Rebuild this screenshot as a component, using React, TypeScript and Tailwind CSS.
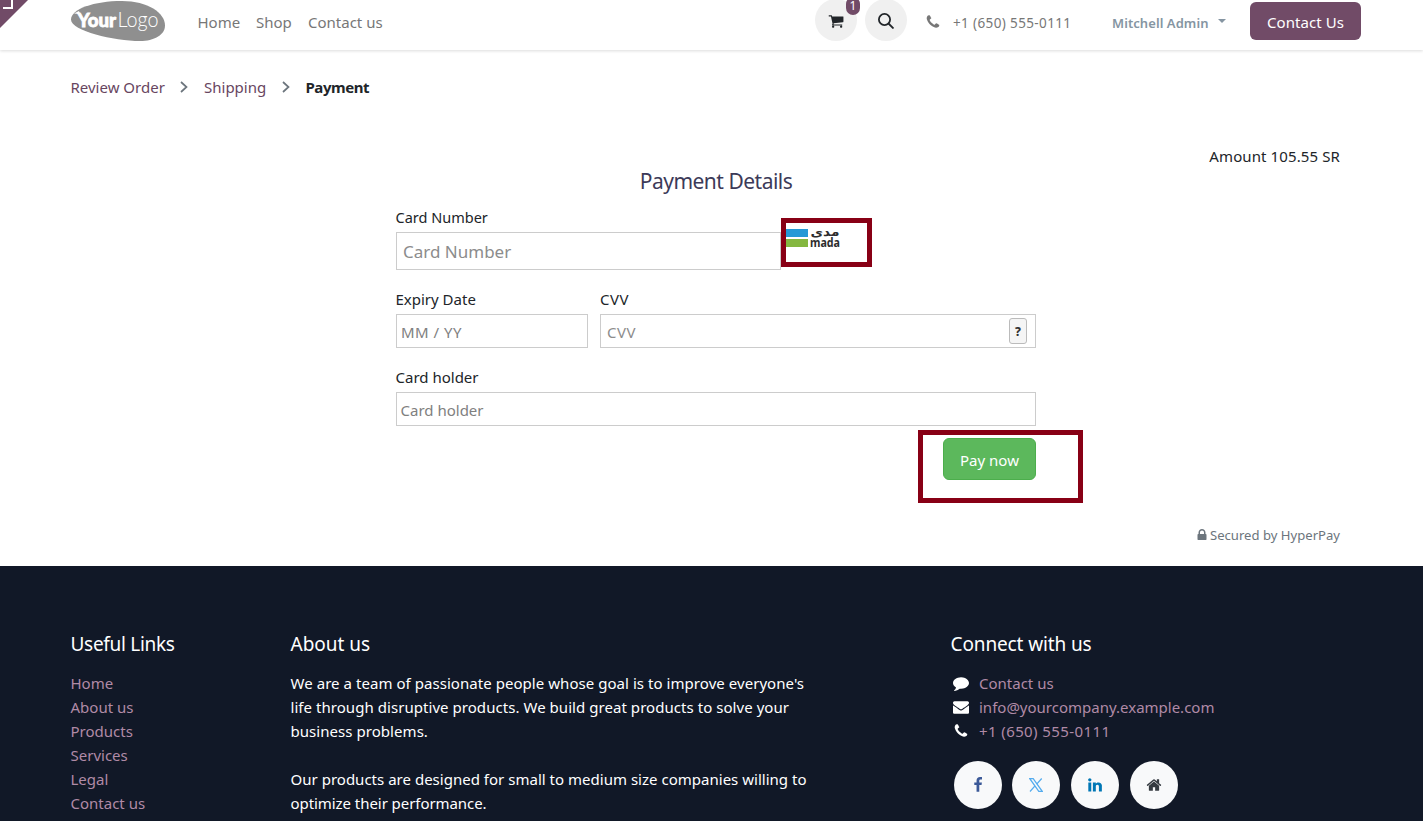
import React from "react";

const PATHS = {
  phone:
    "M1600 1240q0 27-10 70.5t-21 68.5q-21 50-122 106-94 51-186 51-27 0-53-3.5t-57.5-12.5-47-14.5-55.5-20.5-49-18q-98-35-175-83-127-79-264-216t-216-264q-48-77-83-175-3-9-18-49t-20.5-55.5-14.5-47-12.5-57.5-3.5-53q0-92 51-186 56-101 106-122 25-11 68.5-21t70.5-10q14 0 21 3 18 6 53 76 11 19 30 54t35 63.5 31 53.5q3 4 17.5 25t21.5 35.5 7 28.5q0 20-28.5 50t-62 55-62 53-28.5 46q0 9 5 22.5t8.5 20.5 14 24 11.5 19q76 137 174 235t235 174q2 1 19 11.5t24 14 20.5 8.5 22.5 5q18 0 46-28.5t53-62 55-62 50-28.5q14 0 28.5 7t35.5 21.5 25 17.5q25 15 53.5 31t63.5 35 54 30q70 35 76 53 3 7 3 21z",
  cart: "M704 1536q0 52-38 90t-90 38-90-38-38-90 38-90 90-38 90 38 38 90zm896 0q0 52-38 90t-90 38-90-38-38-90 38-90 90-38 90 38 38 90zm128-1088v512q0 24-16.5 42.5t-40.5 21.5l-1044 122q13 60 13 70 0 16-24 64h920q26 0 45 19t19 45-19 45-45 19h-1024q-26 0-45-19t-19-45q0-11 8-31.5t16-36 21.5-40 15.5-29.5l-177-823h-204q-26 0-45-19t-19-45 19-45 45-19h256q16 0 28.5 6.5t19.5 15.5 13 24.5 8 26 5.5 29.5 4.5 26h1201q26 0 45 19t19 45z",
  envelope:
    "M1792 710v794q0 66-47 113t-113 47h-1472q-66 0-113-47t-47-113v-794q44 49 101 87 362 246 497 345 57 42 92.5 65.5t94.5 48 110 24.5h2q51 0 110-24.5t94.5-48 92.5-65.5q170-123 498-345 57-39 100-87zm0-294q0 79-49 151t-122 123q-376 261-468 325-10 7-42.5 31t-54 38.5-52 32.5-57.5 27-50 9h-2q-23 0-50-9t-57.5-27-52-32.5-54-38.5-42.5-31q-91-64-262-182.5t-205-142.5q-62-42-117-115.5t-55-136.5q0-78 41.5-130t118.5-52h1472q65 0 112.5 47t47.5 113z",
  comment:
    "M1792 896q0 174-120 321.5t-326 233-450 85.5q-70 0-145-8-198 175-460 242-49 14-114 22-17 2-30.5-9t-17.5-29v-1q-3-4-.5-12t2-10 4.5-9.5l6-9 7-8.5 8-9q7-8 31-34.5t34.5-38 31-39.5 32.5-51 27-59 26-76q-157-89-247.5-220t-90.5-281q0-130 71-248.5t191-204.5 286-136.5 348-50.5q244 0 450 85.5t326 233 120 321.5z",
  lock: "M640 768h512v-192q0-106-75-181t-181-75-181 75-75 181v192zm832 96v576q0 40-28 68t-68 28h-960q-40 0-68-28t-28-68v-576q0-40 28-68t68-28h32v-192q0-184 132-316t316-132 316 132 132 316v192h32q40 0 68 28t28 68z",
  home: "M1472 992v480q0 26-19 45t-45 19h-384v-384h-256v384h-384q-26 0-45-19t-19-45v-480q0-1 .5-3t.5-3l575-474 575 474q1 2 1 6zm223-69l-62 74q-8 9-21 11h-3q-13 0-21-7l-692-577-692 577q-12 8-24 7-13-2-21-11l-62-74q-8-10-7-23.5t11-21.5l719-599q32-26 76-26t76 26l244 204v-195q0-14 9-23t23-9h192q14 0 23 9t9 23v408l219 182q10 8 11 21.5t-7 23.5z",
  facebook:
    "M1343 12v264h-157q-86 0-116 36t-30 108v189h293l-39 296h-254v759h-306v-759h-255v-296h255v-218q0-186 104-288.5t277-102.5q147 0 228 12z",
  linkedin:
    "M477 625v991h-330v-991h330zm21-306q1 73-50.5 122t-135.5 49h-2q-82 0-132-49t-50-122q0-74 51.5-122.5t134.5-48.5 133 48.5 51 122.5zm1166 729v568h-329v-530q0-105-40.5-164.5t-126.5-59.5q-63 0-105.5 34.5t-63.5 85.5q-11 30-11 81v553h-329q2-399 2-647t-1-296l-1-48h329v144h-2q20-32 41-56t56.5-52 87-43.5 114.5-15.5q171 0 283 113.5t112 332.5z",
};

function Icon({ name, className }: { name: keyof typeof PATHS; className: string }) {
  return (
    <svg viewBox="0 0 1792 1792" className={`shrink-0 overflow-visible ${className}`} fill="currentColor">
      <path d={PATHS[name]} />
    </svg>
  );
}

function Logo() {
  return (
    <svg viewBox="0 0 96 42" className="-mt-px h-[42px] w-24 shrink-0">
      <path
        d="M1 20.500C1 10 24 2 52 2C78 2 95 14 95 26.500C95 36 84 42 70 42C44 42 1 32 1 20.500Z"
        fill="#8f8f8f"
      />
      <path d="M4 14.500l5-2.500 1 3z" fill="#fff" />
      <text x="7.500" y="27.500" textLength="38.500" lengthAdjust="spacingAndGlyphs" fill="#fff" stroke="#fff" strokeWidth="0.800" fontFamily="Lato" fontWeight="900" fontSize="19.500">
        Your
      </text>
      <text x="47.500" y="27.500" textLength="41" lengthAdjust="spacingAndGlyphs" fill="#fff" fontFamily="Lato" fontWeight="300" fontSize="21">
        Logo
      </text>
    </svg>
  );
}

function Header() {
  return (
    <header className="flex h-[50px] items-start bg-white pl-[70px] shadow-[0_1px_3px_rgba(0,0,0,0.14)]">
      <Logo />
      <nav className="ml-[31.500px] flex pt-[10px] leading-6 text-[#777]">
        <a className="w-[58.500px]">Home</a>
        <a className="w-[52px]">Shop</a>
        <a className="w-[80px] whitespace-nowrap">Contact us</a>
      </nav>
      <div className="relative ml-[427px] -mt-px flex size-[42px] shrink-0 items-center justify-center rounded-full bg-[#f0f0f0] text-[#212529]">
        <Icon name="cart" className="mt-0.5 size-4" />
        <span className="absolute left-[31px] top-[-2px] flex h-[18px] w-[14px] items-center justify-center rounded-[7px] bg-[#714b67] text-xs leading-[18px] text-white">
          1
        </span>
      </div>
      <div className="-mt-px ml-2 flex size-[42px] shrink-0 items-center justify-center rounded-full bg-[#f0f0f0]">
        <svg viewBox="0 0 16 16" className="mt-0.5 size-4" fill="none" stroke="#212529" strokeWidth="1.800">
          <circle cx="6.500" cy="6.500" r="5.600" />
          <path d="M10.500 10.500L15.500 15.500" />
        </svg>
      </div>
      <Icon name="phone" className="ml-[18px] mt-[14px] size-4 text-[#777]" />
      <span className="ml-[12px] mt-[11px] w-[159px] whitespace-nowrap text-[13.500px] leading-6 tracking-[0.370px] text-[#777]">+1 (650) 555-0111</span>
      <span className="mt-[11px] w-[106px] whitespace-nowrap text-[13px] font-semibold leading-6 tracking-[0.070px] text-[#8595a2]">Mitchell Admin</span>
      <span className="mt-[19px] border-x-4 border-t-4 border-x-transparent border-t-[#8595a2]" />
      <button className="ml-6 mt-0.5 h-[38px] w-[111px] rounded-md bg-[#714b67] pt-0.5 tracking-[0.060px] text-white">Contact Us</button>
    </header>
  );
}

function Chevron() {
  return (
    <svg viewBox="0 0 8 12" className="h-3 w-2" fill="none" stroke="#6c757d" strokeWidth="1.700">
      <path d="M1 1l5.500 5L1 11" />
    </svg>
  );
}

function XLogo() {
  return (
    <svg viewBox="0 0 14 14" className="size-[14px]" fill="none" stroke="#55acee" strokeWidth="1.250">
      <path d="M0.800 0.700H4.200L13.200 13.300H9.800Z" />
      <path d="M12.700 0.500L7.700 6.100M6 7.900L1 13.500" />
    </svg>
  );
}

function Mada() {
  return (
    <div className="absolute left-[384px] top-[-15px] flex h-[49px] w-[91px] border-[5px] border-[#880015] pt-[4px]">
      <div className="w-[22px] pt-[2px]">
        <div className="h-2 bg-[#2499d6]" />
        <div className="mt-[2px] h-2 bg-[#84b740]" />
      </div>
      <svg viewBox="0 0 32 22" className="ml-[2px] h-[22px] w-8 overflow-visible" fill="#2d2d2d" fontWeight="700">
        <text x="29.500" y="8.500" textAnchor="end" direction="ltr" fontFamily="DejaVu Sans" fontSize="11.500" textLength="29" lengthAdjust="spacingAndGlyphs">
          مدى
        </text>
        <text x="0" y="19.500" fontFamily="Noto Sans" fontSize="11.500" textLength="30" lengthAdjust="spacingAndGlyphs">
          mada
        </text>
      </svg>
    </div>
  );
}

function PaymentForm() {
  return (
    <form className="relative w-[640px] text-[#212529]">
      <h2 className="h-[29px] pt-px text-center text-[21px] leading-[29px] tracking-[-0.500px] text-[#3c3a58]">Payment Details</h2>
      <div className="mt-[10px] text-[14.500px] leading-6 -ml-[0.500px]">Card Number</div>
      <div className="relative mt-[3px] flex h-[38px] w-[385px] items-center border border-[#ccc] px-1.5 pt-px text-[17px] text-[#8c8c8c]">
        Card Number
        <Mada />
      </div>
      <div className="mt-[17px] flex gap-3">
        <div className="w-48">
          <div className="-ml-[0.500px] leading-6">Expiry Date</div>
          <div className="mt-[3px] flex h-[34px] items-center border border-[#ccc] px-1 pt-0.5 tracking-[0.500px] text-[#808080]">MM / YY</div>
        </div>
        <div className="grow">
          <div className="leading-6 tracking-[0.500px]">CVV</div>
          <div className="mt-[3px] flex h-[34px] items-center justify-between border border-[#ccc] pl-1.5 pr-2 text-[#8c8c8c]">
            <span className="pt-0.5 tracking-[0.500px]">CVV</span>
            <span className="flex h-[26px] w-[18px] items-center justify-center rounded-[3px] border border-[#bbb] bg-[#f5f5f5] pt-0.5 text-xs font-extrabold text-[#333]">
              ?
            </span>
          </div>
        </div>
      </div>
      <div className="-ml-[0.500px] mt-[17px] leading-6">Card holder</div>
      <div className="mt-[3px] flex h-[34px] items-center border border-[#ccc] px-[3.500px] pt-0.5 text-[#808080]">Card holder</div>
      <div className="relative mt-3 flex h-[42px] justify-end">
        <button type="button" className="w-[93px] rounded-md border border-[#4cae4c] bg-[#5cb85c] pt-0.5 text-white">
          Pay now
        </button>
        <div className="absolute left-[522px] top-[-8px] h-[73px] w-[165px] border-[5px] border-[#880015]" />
      </div>
    </form>
  );
}

function Footer() {
  const circle = "flex size-12 items-center justify-center rounded-full bg-[#f8f9fa]";
  return (
    <footer className="flex h-[255px] overflow-hidden bg-[#111827] pl-[70.500px] pt-[64px] leading-6 text-white">
      <section className="w-[220px]">
        <h5 className="mb-[13px] text-[19px] leading-7 tracking-[-0.300px]">Useful Links</h5>
        <ul className="text-[#b08aa6]">
          <li>Home</li>
          <li>About us</li>
          <li>Products</li>
          <li>Services</li>
          <li>Legal</li>
          <li>Contact us</li>
        </ul>
      </section>
      <section className="w-[660px] whitespace-nowrap">
        <h5 className="mb-[13px] text-[19px] leading-7">About us</h5>
        <p className="tracking-[0.050px]">
          We are a team of passionate people whose goal is to improve everyone's
          <br />
          life through disruptive products. We build great products to solve your
          <br />
          business problems.
        </p>
        <p className="mt-6 tracking-[0.015px]">
          Our products are designed for small to medium size companies willing to
          <br />
          <span className="tracking-[-0.060px]">optimize their performance.</span>
        </p>
      </section>
      <section className="whitespace-nowrap">
        <h5 className="mb-[13px] text-[19px] leading-7 tracking-[-0.120px]">Connect with us</h5>
        <ul className="text-[#b08aa6]">
          <li className="flex items-center gap-[10.500px] pl-0.5">
            <Icon name="comment" className="size-4 text-white" />
            Contact us
          </li>
          <li className="flex items-center gap-[10.500px] pl-0.5">
            <Icon name="envelope" className="size-4 text-white" />
            info@yourcompany.example.com
          </li>
          <li className="flex items-center gap-[10.500px] pl-0.5 tracking-[0.400px]">
            <Icon name="phone" className="size-4 text-white" />
            +1 (650) 555-0111
          </li>
        </ul>
        <div className="ml-[3px] mt-[18px] flex gap-[10.700px]">
          <a className={circle}>
            <Icon name="facebook" className="size-4 text-[#3b5998]" />
          </a>
          <a className={circle}>
            <XLogo />
          </a>
          <a className={circle}>
            <Icon name="linkedin" className="size-4 text-[#0077b5]" />
          </a>
          <a className={circle}>
            <Icon name="home" className="size-4 text-[#343a40]" />
          </a>
        </div>
      </section>
    </footer>
  );
}

export default function App() {
  return (
    <div className="relative h-[821px] w-[1423px] overflow-hidden bg-white font-['Noto_Sans',sans-serif] text-[15px]">
      <Header />
      <svg viewBox="0 0 28 28" className="absolute left-0 top-0 size-7">
        <path d="M0 0H28L0 28Z" fill="#714b67" />
        <path d="M12 0V8H3" fill="none" stroke="#fff" strokeWidth="2" />
      </svg>
      <main className="h-[516px] pl-[70.500px] pr-[83px] pt-[25px]">
        <div className="flex h-6 items-center whitespace-nowrap leading-6 text-[#68465f]">
          <span className="w-[109px]">Review Order</span>
          <Chevron />
          <span className="ml-[16.500px] w-[77.500px]">Shipping</span>
          <Chevron />
          <span className="ml-4 font-bold tracking-[-0.450px] text-[#212529]">Payment</span>
        </div>
        <div className="mt-[45px] text-right leading-6 tracking-[0.110px] text-[#212529]">Amount 105.55 SR</div>
        <div className="-mt-[2px] pl-[325.500px]">
          <PaymentForm />
        </div>
        <div className="mt-[43px] flex items-center justify-end gap-px text-[13.100px] leading-6 text-[#6c757d]">
          <Icon name="lock" className="size-[14px]" />
          <span>Secured by HyperPay</span>
        </div>
      </main>
      <Footer />
    </div>
  );
}
